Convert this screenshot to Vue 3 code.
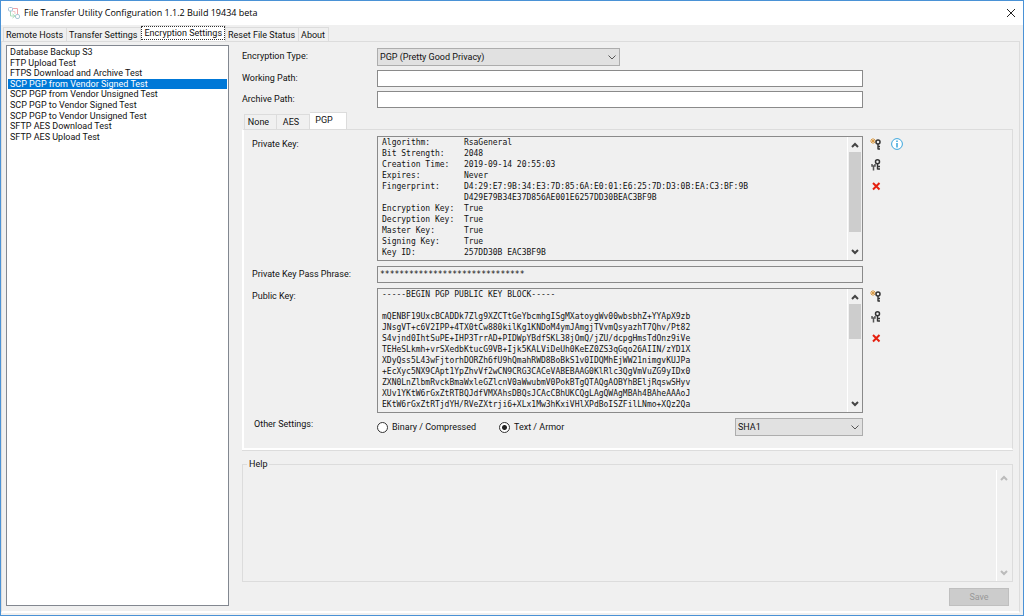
<script setup>
import { ref } from 'vue'

const tabs = ['Remote Hosts', 'Transfer Settings', 'Encryption Settings', 'Reset File Status', 'About']
const activeTab = ref('Encryption Settings')
const keyTabs = ['None', 'AES', 'PGP']
const activeKeyTab = ref('PGP')
const jobs = [
  'Database Backup S3',
  'FTP Upload Test',
  'FTPS Download and Archive Test',
  'SCP PGP from Vendor Signed Test',
  'SCP PGP from Vendor Unsigned Test',
  'SCP PGP to Vendor Signed Test',
  'SCP PGP to Vendor Unsigned Test',
  'SFTP AES Download Test',
  'SFTP AES Upload Test'
]
const selectedJob = ref(jobs[3])
const outputFormat = ref('text')
const workingPath = ref('')
const archivePath = ref('')
const passPhrase = '*'.repeat(30)
const help = ref('')

const privateKey = [
  'Algorithm:       RsaGeneral',
  'Bit Strength:    2048',
  'Creation Time:   2019-09-14 20:55:03',
  'Expires:         Never',
  'Fingerprint:     D4:29:E7:9B:34:E3:7D:85:6A:E0:01:E6:25:7D:D3:0B:EA:C3:BF:9B',
  '                 D429E79B34E37D856AE001E6257DD30BEAC3BF9B',
  'Encryption Key:  True',
  'Decryption Key:  True',
  'Master Key:      True',
  'Signing Key:     True',
  'Key ID:          257DD30B EAC3BF9B'
].join('\n')

const publicKey = [
  '-----BEGIN PGP PUBLIC KEY BLOCK-----',
  '',
  'mQENBF19UxcBCADDk7Zlg9XZCTtGeYbcmhgISgMXatoygWv00wbsbhZ+YYApX9zb',
  'JNsgVT+c6V2IPP+4TX0tCw880kilKg1KNDoM4ymJAmgjTVvmQsyazhT7Qhv/Pt82',
  'S4vjnd0IhtSuPE+IHP3TrrAD+PIDWpYBdfSKL38jOmQ/jZU/dcpgHmsTdOnz9iVe',
  'TEHeSLkmh+vrSXedbKtucG9VB+Ijk5KALViDeUh0KeEZ0ZS3qGqo26AIIN/zYD1X',
  'XDyQss5L43wFjtorhDORZh6fU9hQmahRWD8BoBkS1v0IDQMhEjWW21nimgvKUJPa',
  '+EcXyc5NX9CApt1YpZhvVf2wCN9CRG3CACeVABEBAAG0KlRlc3QgVmVuZG9yIDx0',
  'ZXN0LnZlbmRvckBmaWxleGZlcnV0aWwubmV0PokBTgQTAQgAOBYhBEljRqswSHyv',
  'XUv1YKtW6rGxZtRTBQJdfVMXAhsDBQsJCAcCBhUKCQgLAgQWAgMBAh4BAheAAAoJ',
  'EKtW6rGxZtRTjdYH/RVeZXtrji6+XLx1Mw3hKxiVHlXPdBoISZFilLNmo+XQz2Qa'
].join('\n')
</script>

<template>
  <div class="window">
    <header class="titlebar">
      <svg class="logo" viewBox="0 0 12 12" aria-hidden="true">
        <g fill="none">
          <path d="M2.500 4v5H6" stroke="#a9dcbc" />
          <path d="M4.500 1.500H9.500V7" stroke="#eda3a8" />
          <path d="M4.500 4.500H7V7" stroke="#f3c4c7" />
          <rect x=".5" y=".5" width="4" height="3.500" rx="1" stroke="#9fc0d8" />
          <rect x="7.500" y="7.500" width="4" height="4" rx="1.500" stroke="#a9c8d4" />
          <path d="M4.500 7l2.500 2-2.500 2" stroke="#a9dcbc" />
        </g>
      </svg>
      <h1>File Transfer Utility Configuration 1.1.2 Build 19434 beta</h1>
      <button class="close" aria-label="Close">
        <svg viewBox="0 0 10 10"><path d="M1 1l8 8M9 1l-8 8" fill="none" stroke="#222" /></svg>
      </button>
    </header>

    <nav class="tabs main-tabs" role="tablist">
      <button
        v-for="tab in tabs"
        :key="tab"
        role="tab"
        :aria-selected="tab === activeTab"
        :class="{ active: tab === activeTab }"
        @click="activeTab = tab"
      ><span>{{ tab }}</span></button>
    </nav>

    <main class="page">
      <div class="jobs">
        <ul role="listbox" aria-label="Jobs">
          <li
            v-for="job in jobs"
            :key="job"
            role="option"
            :aria-selected="job === selectedJob"
            :class="{ selected: job === selectedJob }"
            @click="selectedJob = job"
          >{{ job }}</li>
        </ul>
      </div>

      <section class="detail">
        <div class="form top">
          <label for="type">Encryption Type:</label>
          <div class="combo type">
            <select id="type"><option>PGP (Pretty Good Privacy)</option></select>
            <svg viewBox="0 0 8 5"><path d="M.5.5L4 4 7.500.5" fill="none" stroke="#555" /></svg>
          </div>
          <label for="working">Working Path:</label>
          <input id="working" v-model="workingPath" class="box" type="text" />
          <label for="archive">Archive Path:</label>
          <input id="archive" v-model="archivePath" class="box" type="text" />
        </div>

        <div class="tabs key-tabs" role="tablist">
          <button
            v-for="tab in keyTabs"
            :key="tab"
            role="tab"
            :aria-selected="tab === activeKeyTab"
            :class="{ active: tab === activeKeyTab }"
            @click="activeKeyTab = tab"
          >{{ tab }}</button>
        </div>

        <div class="panel">
          <div class="form keys">
            <label for="private">Private Key:</label>
            <div class="memo">
              <textarea id="private" readonly :value="privateKey"></textarea>
              <div class="scroll">
                <svg viewBox="0 0 8 6"><path d="M1 5l3-3 3 3" /></svg>
                <i class="thumb long"></i>
                <svg viewBox="0 0 8 6"><path d="M1 1l3 3 3-3" /></svg>
              </div>
            </div>
            <div class="tools">
              <button aria-label="New private key">
                <svg viewBox="0 0 12 12">
                  <path d="M3 0v6M0 3h6M1 1l4 4M5 1L1 5" stroke="#d99a45" fill="none" />
                  <circle cx="8" cy="4" r="2" fill="none" stroke="#333" stroke-width="1.500" />
                  <path d="M8 6v5.500M8 8.500h2M8 11h2" stroke="#333" stroke-width="1.400" fill="none" />
                </svg>
              </button>
              <button aria-label="Private key information">
                <svg viewBox="0 0 12 12">
                  <circle cx="6" cy="6" r="5.400" fill="#fff" stroke="#3aa5dc" />
                  <path d="M6 2.500v1.500M6 5v4.500" stroke="#3aa5dc" stroke-width="1.500" />
                </svg>
              </button>
              <button aria-label="Select private key">
                <svg viewBox="0 0 12 12">
                  <circle cx="7.500" cy="2.800" r="2" fill="none" stroke="#333" stroke-width="1.500" />
                  <path d="M7.500 5v5.500M7.500 7.500h2.500M7.500 10h2.500" stroke="#333" stroke-width="1.400" fill="none" />
                  <path d="M2 5v2h3V5M3.500 7v4.500" stroke="#555" stroke-width="1.500" fill="none" />
                </svg>
              </button>
              <span></span>
              <button aria-label="Remove private key">
                <svg viewBox="0 0 12 12"><path d="M3 3l6.500 6.500M9.500 3L3 9.500" stroke="#e5200f" stroke-width="2" /></svg>
              </button>
            </div>

            <label for="phrase">Private Key Pass Phrase:</label>
            <input id="phrase" class="box phrase" type="text" readonly :value="passPhrase" />

            <label for="public">Public Key:</label>
            <div class="memo">
              <textarea id="public" readonly :value="publicKey"></textarea>
              <div class="scroll">
                <svg viewBox="0 0 8 6"><path d="M1 5l3-3 3 3" /></svg>
                <i class="thumb short"></i>
                <svg viewBox="0 0 8 6"><path d="M1 1l3 3 3-3" /></svg>
              </div>
            </div>
            <div class="tools">
              <button aria-label="New public key">
                <svg viewBox="0 0 12 12">
                  <path d="M3 0v6M0 3h6M1 1l4 4M5 1L1 5" stroke="#d99a45" fill="none" />
                  <circle cx="8" cy="4" r="2" fill="none" stroke="#333" stroke-width="1.500" />
                  <path d="M8 6v5.500M8 8.500h2M8 11h2" stroke="#333" stroke-width="1.400" fill="none" />
                </svg>
              </button>
              <span></span>
              <button aria-label="Select public key">
                <svg viewBox="0 0 12 12">
                  <circle cx="7.500" cy="2.800" r="2" fill="none" stroke="#333" stroke-width="1.500" />
                  <path d="M7.500 5v5.500M7.500 7.500h2.500M7.500 10h2.500" stroke="#333" stroke-width="1.400" fill="none" />
                  <path d="M2 5v2h3V5M3.500 7v4.500" stroke="#555" stroke-width="1.500" fill="none" />
                </svg>
              </button>
              <span></span>
              <button aria-label="Remove public key">
                <svg viewBox="0 0 12 12"><path d="M3 3l6.500 6.500M9.500 3L3 9.500" stroke="#e5200f" stroke-width="2" /></svg>
              </button>
            </div>

            <span class="other">Other Settings:</span>
            <div class="options">
              <label class="radio binary"><input v-model="outputFormat" type="radio" name="format" value="binary" />Binary / Compressed</label>
              <label class="radio"><input v-model="outputFormat" type="radio" name="format" value="text" />Text / Armor</label>
              <div class="combo hash">
                <select aria-label="Hash algorithm"><option>SHA1</option></select>
                <svg viewBox="0 0 8 5"><path d="M.5.5L4 4 7.500.5" fill="none" stroke="#555" /></svg>
              </div>
            </div>
          </div>
        </div>

        <fieldset class="help">
          <legend><label for="help">Help</label></legend>
          <textarea id="help" v-model="help" readonly></textarea>
          <div class="scroll faint">
            <svg viewBox="0 0 8 6"><path d="M1 5l3-3 3 3" /></svg>
            <svg viewBox="0 0 8 6"><path d="M1 1l3 3 3-3" /></svg>
          </div>
        </fieldset>

        <button class="save" disabled>Save</button>
      </section>
    </main>
  </div>
</template>

<style>
body {
  background: #f0f0f0;
}
</style>

<style scoped>
* {
  box-sizing: border-box;
}
.window {
  display: flex;
  flex-direction: column;
  min-height: 100vh;
  padding-bottom: 2px;
  border: 1px solid #4a92d6;
  background: #f0f0f0;
  color: #111;
  font: 9px/12px Roboto, "Liberation Sans", sans-serif;
}
button,
input,
select,
textarea {
  margin: 0;
  padding: 0;
  border: 0;
  border-radius: 0;
  outline: 0;
  background: none;
  color: inherit;
  font: inherit;
}
svg {
  display: block;
}
.titlebar {
  display: flex;
  align-items: center;
  height: 24px;
  padding: 0 7px;
  background: #fff;
}
.logo {
  width: 12px;
  height: 12px;
}
h1 {
  flex: 1;
  margin: 0 0 0 4px;
  font: 9px/14px "Open Sans", "Noto Sans", sans-serif;
  color: #000;
}
.close svg {
  width: 10px;
  height: 10px;
}
.tabs {
  display: flex;
  align-items: flex-end;
}
.tabs button {
  height: 14px;
  border: 1px solid #dcdcdc;
  border-bottom: 0;
  border-left-width: 0;
  white-space: nowrap;
}
.tabs button:first-child {
  border-left-width: 1px;
}
.main-tabs {
  height: 16px;
  padding-left: 2px;
}
.main-tabs button {
  padding: 0 3px 0 2px;
}
.main-tabs .active {
  height: 16px;
  padding: 0 0 2px;
  background: #fff;
}
.main-tabs .active span {
  display: block;
  padding: 0 2px;
  border: 1px dotted #333;
}
.page {
  flex: 1;
  display: flex;
  gap: 13px;
  margin: 0 3px 0 0;
  padding: 3px 6px 5px 4px;
  border: 1px solid #dcdcdc;
  border-bottom: 2px solid #fff;
}
.jobs {
  flex: 0 0 223px;
  padding: 1px;
  border: 1px solid #828790;
  background: #fff;
}
ul {
  display: grid;
  grid-auto-rows: 1fr;
  height: 95px;
  margin: 0;
  padding: 0;
  list-style: none;
}
li {
  display: flex;
  align-items: center;
  min-height: 0;
  padding-left: 2px;
  line-height: 10px;
}
li.selected {
  background: #0078d7;
  color: #fff;
}
.detail {
  flex: 1;
  display: flex;
  flex-direction: column;
  min-width: 0;
}
.form {
  display: grid;
  grid-template-columns: 125px minmax(0, 1fr) 150px;
}
.top {
  grid-template-columns: 135px minmax(0, 1fr);
  row-gap: 4px;
  padding: 3px 150px 0 0;
}
.top label {
  line-height: 17px;
}
.box {
  width: 100%;
  height: 17px;
  border: 1px solid #8a8a8a;
  background: #fff;
}
.combo {
  display: flex;
  align-items: center;
  height: 18px;
  padding-right: 3px;
  border: 1px solid #adadad;
  background: #e1e1e1;
}
.combo select {
  flex: 1;
  min-width: 0;
  padding-left: 2px;
  appearance: none;
}
.combo svg {
  width: 8px;
  height: 5px;
}
.type {
  width: 50%;
}
.key-tabs {
  height: 17px;
  margin-top: 4px;
  padding-left: 2px;
}
.key-tabs button {
  width: 33px;
  height: 15px;
  padding-right: 4px;
}
.key-tabs .active {
  width: 37px;
  height: 17px;
  padding: 0 8px 2px 0;
  background: #fff;
}
.panel {
  padding: 6px 0 12px 8px;
  border-style: solid;
  border-width: 1px 1px 2px 2px;
  border-color: #dcdcdc #dcdcdc #fff #fff;
  box-shadow: 0 1px #dcdcdc;
}
.keys {
  row-gap: 5px;
  margin-right: -1px;
}
.keys > label {
  padding-top: 2px;
}
.memo {
  display: flex;
  height: 125px;
  border: 1px solid #8a8a8a;
}
.memo textarea {
  flex: 1;
  min-width: 0;
  padding-left: 4px;
  resize: none;
  overflow: hidden;
  white-space: pre;
  font: 8px/11px "DejaVu Sans Mono", monospace;
}
.scroll {
  display: flex;
  flex-direction: column;
  align-items: center;
  width: 15px;
  padding: 5px 0;
  border-left: 1px solid #fff;
}
.scroll svg {
  width: 8px;
  height: 6px;
}
.scroll path {
  fill: none;
  stroke: #444;
  stroke-width: 2;
}
.scroll svg:last-child {
  margin-top: auto;
}
.thumb {
  width: 12px;
  margin-top: 4px;
  background: #cdcdcd;
}
.long {
  height: 80px;
}
.short {
  height: 35px;
}
.tools {
  display: grid;
  grid-template-columns: 12px 12px;
  grid-auto-rows: 12px;
  gap: 9px;
  padding: 2px 0 0 7px;
}
.tools svg {
  width: 12px;
  height: 12px;
}
.phrase {
  grid-column: 2;
  padding: 0 2px;
  background: none;
  font: 8px/12px "DejaVu Sans Mono", monospace;
}
.keys > label[for="public"] {
  grid-column: 1;
}
.other {
  padding: 0 0 0 2px;
}
.options {
  display: flex;
  align-items: center;
  height: 18px;
}
.radio {
  display: flex;
  align-items: center;
  gap: 4px;
}
.binary {
  width: 122px;
}
.radio input {
  width: 11px;
  height: 11px;
  border: 1px solid #333;
  border-radius: 50%;
  background: #fff;
  appearance: none;
}
.radio input:checked {
  background: radial-gradient(circle, #222 0 2px, #fff 3px);
}
.hash {
  width: 128px;
  margin-left: auto;
}
.help {
  flex: 1;
  display: flex;
  min-width: 0;
  margin: 8px 0 6px;
  padding: 0 1px 0 8px;
  border: 1px solid #dcdcdc;
}
.help legend {
  margin-left: -4px;
  padding: 0 2px;
}
.help textarea {
  flex: 1;
  resize: none;
}
.faint path {
  stroke: #bbb;
}
.save {
  align-self: flex-end;
  width: 60px;
  height: 18px;
  margin-right: 4px;
  border: 1px solid #bfbfbf;
  background: #ccc;
  color: #999;
}
</style>
